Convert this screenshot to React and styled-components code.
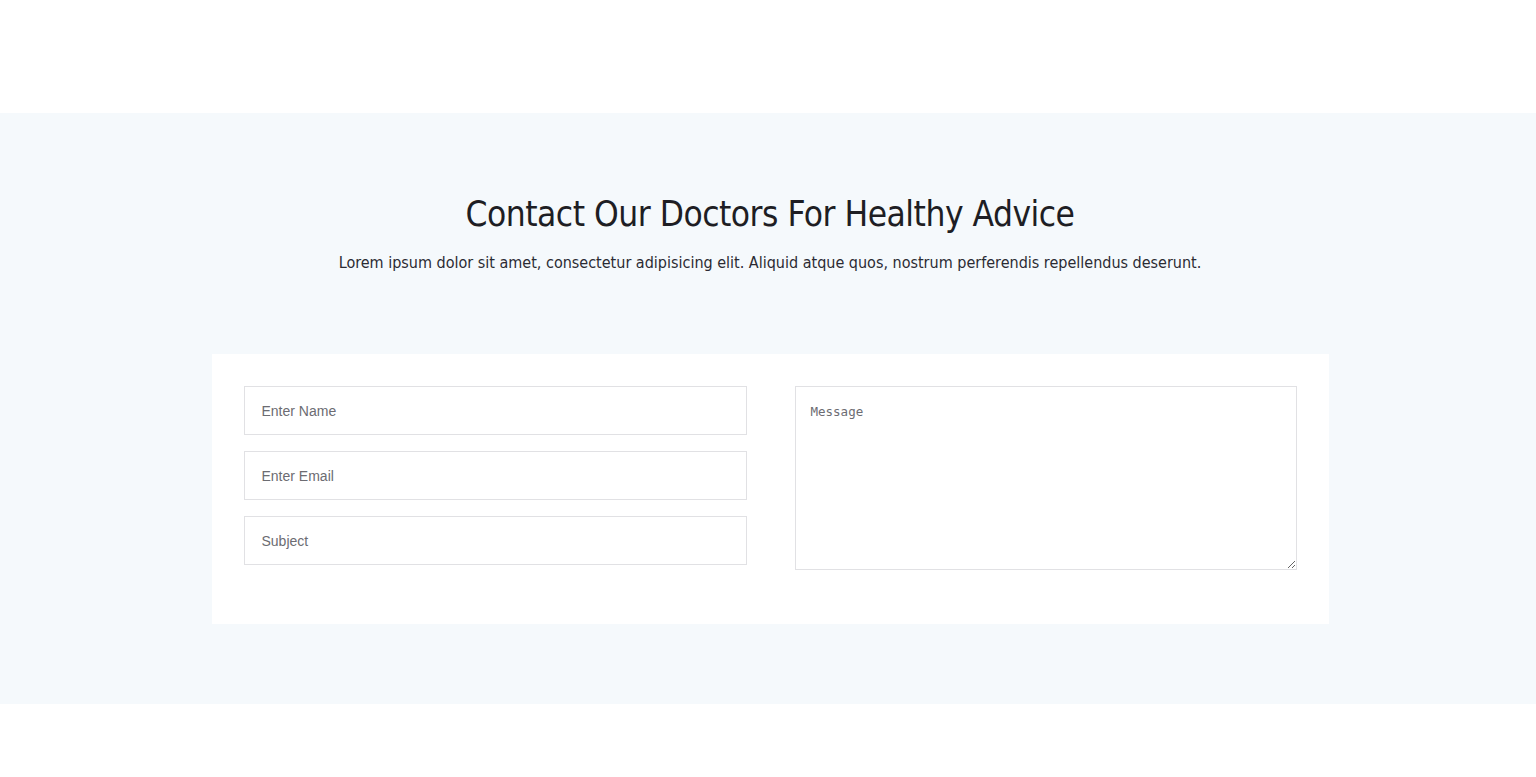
import React from 'react';
import styled, { createGlobalStyle } from 'styled-components';

const GlobalStyle = createGlobalStyle`
  body {
    margin: 0;
    background: #ffffff;
    font-family: "Liberation Sans", Arial, sans-serif;
  }
`;

const Page = styled.div`
  padding-top: 113px;
  padding-bottom: 74px;
`;

const Section = styled.section`
  background-color: #f5f9fc;
  padding: 80px 0 80px 4px;
`;

const Header = styled.div`
  text-align: center;
  margin-bottom: 79px;
`;

const Title = styled.h2`
  margin: 0;
  font-family: "DejaVu Sans Condensed", "DejaVu Sans", sans-serif;
  font-stretch: condensed;
  font-weight: 400;
  font-size: 35px;
  letter-spacing: -0.5px;
  line-height: 42px;
  color: #1e1e24;
`;

const Subtitle = styled.p`
  margin: 16px 0 0;
  font-family: "DejaVu Sans Condensed", "DejaVu Sans", sans-serif;
  font-stretch: condensed;
  font-size: 16px;
  line-height: 24px;
  color: #2b2b33;
`;

const Card = styled.form`
  width: 1117px;
  box-sizing: border-box;
  margin: 0 auto;
  background: #ffffff;
  padding: 32px;
  display: grid;
  grid-template-columns: 503px 502px;
  column-gap: 48px;
  align-items: start;
  height: 270px;
`;

const Column = styled.div`
  display: flex;
  flex-direction: column;
  gap: 16px;
`;

const Input = styled.input`
  height: 49px;
  box-sizing: border-box;
  border: 1px solid #e1e1e4;
  padding: 0 17px;
  font-family: "Liberation Sans", Arial, sans-serif;
  font-size: 14px;
  color: #333;
  outline: none;
  &::placeholder {
    color: #6c6c72;
  }
`;

const Message = styled.textarea`
  height: 184px;
  box-sizing: border-box;
  border: 1px solid #e1e1e4;
  padding: 17px 15px;
  font-family: "DejaVu Sans Mono", monospace;
  font-size: 12.5px;
  outline: none;
  resize: vertical;
  &::placeholder {
    color: #6c6c72;
  }
`;

export default function App() {
  return (
    <Page>
      <GlobalStyle />
      <Section>
        <Header>
          <Title>Contact Our Doctors For Healthy Advice</Title>
          <Subtitle>
            Lorem ipsum dolor sit amet, consectetur adipisicing elit. Aliquid atque quos, nostrum perferendis repellendus deserunt.
          </Subtitle>
        </Header>
        <Card>
          <Column>
            <Input type="text" placeholder="Enter Name" />
            <Input type="email" placeholder="Enter Email" />
            <Input type="text" placeholder="Subject" />
          </Column>
          <Message placeholder="Message" />
        </Card>
      </Section>
    </Page>
  );
}
